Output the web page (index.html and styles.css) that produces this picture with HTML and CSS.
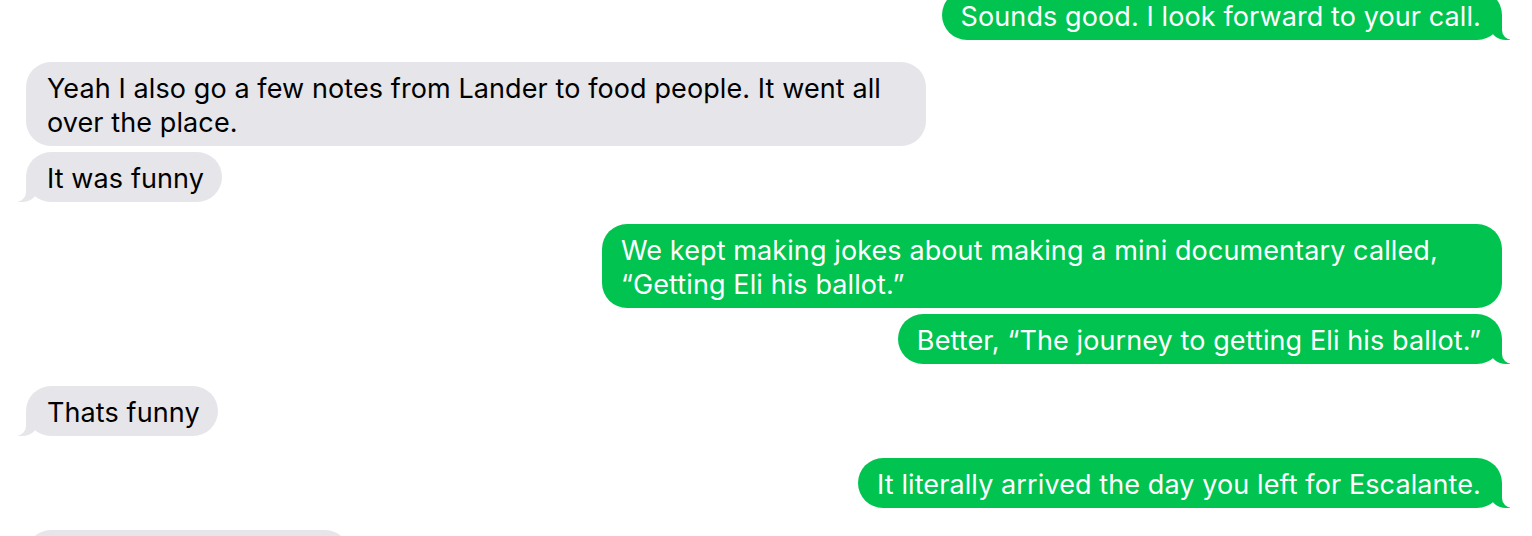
FILE: index.html
```html
<!DOCTYPE html>
<html>
<head>
<meta charset="utf-8">
<link rel="stylesheet" href="styles.css">
</head>
<body>
<div class="thread">
  <div class="bubble sent tail first">Sounds good. I look forward to your call.</div>
  <div class="group">
    <div class="bubble recv">Yeah I also go a few notes from Lander to food people. It went all over the place.</div>
    <div class="bubble recv tail">It was funny</div>
  </div>
  <div class="group">
    <div class="bubble sent">We kept making jokes about making a mini documentary called, “Getting Eli his ballot.”</div>
    <div class="bubble sent tail">Better, “The journey to getting Eli his ballot.”</div>
  </div>
  <div class="bubble recv tail">Thats funny</div>
  <div class="bubble sent tail">It literally arrived the day you left for Escalante.</div>
  <div class="bubble recv placeholder"></div>
</div>
</body>
</html>
```
FILE: styles.css
```css
html, body {
  margin: 0;
  padding: 0;
  background: #ffffff;
  overflow: hidden;
}
body {
  width: 1532px;
  height: 536px;
  font-family: Inter, "Liberation Sans", sans-serif;
}
.thread {
  display: flex;
  flex-direction: column;
  gap: 22px;
  padding: 0 30px 0 26px;
}
.group {
  display: flex;
  flex-direction: column;
  gap: 6px;
}
.bubble {
  position: relative;
  max-width: 900px;
  box-sizing: border-box;
  border-radius: 25px;
  font-size: 27px;
  line-height: 34px;
  letter-spacing: 0.1px;
}
.first {
  margin-top: -10px;
}
.sent {
  align-self: flex-end;
  padding: 10px 21px 6px 19px;
  background: #00c44f;
  color: #ffffff;
}
.recv {
  align-self: flex-start;
  padding: 10px 18px 6px 21px;
  background: #e5e5ea;
  color: #000000;
}
.placeholder {
  width: 324px;
  height: 50px;
}
.tail::before,
.tail::after {
  content: "";
  position: absolute;
  bottom: 0;
  height: 25px;
}
.sent.tail::before {
  right: -8px;
  width: 20px;
  background: #00c44f;
  border-bottom-left-radius: 16px 14px;
}
.sent.tail::after {
  right: -26px;
  width: 26px;
  background: #ffffff;
  border-bottom-left-radius: 10px;
}
.recv.tail::before {
  left: -8px;
  width: 20px;
  background: #e5e5ea;
  border-bottom-right-radius: 16px 14px;
}
.recv.tail::after {
  left: -26px;
  width: 26px;
  background: #ffffff;
  border-bottom-right-radius: 10px;
}
```
